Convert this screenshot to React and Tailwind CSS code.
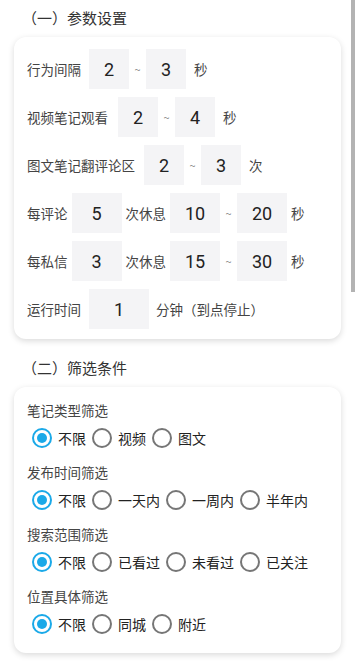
import { useState } from 'react'

const FONT = { fontFamily: '"Noto Sans CJK SC", "Noto Sans", sans-serif' }

function Box({ value, w = 'w-10' }) {
  return (
    <div
      className={`${w} h-10 bg-[#f4f4f6] flex items-center justify-center text-[18px] text-[#222] shrink-0`}
      style={{ fontFamily: 'Roboto, "Noto Sans", sans-serif' }}
    >
      {value}
    </div>
  )
}

function Tilde() {
  return <span className="w-[17px] text-center text-[11px] text-[#888] shrink-0">~</span>
}

function Radio({ checked, label, onClick }) {
  return (
    <button onClick={onClick} className="flex items-center mr-[6px]">
      <span
        className={`w-[20px] h-[20px] rounded-full border-2 flex items-center justify-center mr-[6px] ${
          checked ? 'border-[#1aa9e8]' : 'border-[#767676]'
        }`}
      >
        {checked && <span className="w-[10px] h-[10px] rounded-full bg-[#1aa9e8]" />}
      </span>
      <span className="text-[14px] text-[#222]">{label}</span>
    </button>
  )
}

function RadioGroup({ title, options }) {
  const [sel, setSel] = useState(0)
  return (
    <div>
      <div className="text-[13.5px] text-[#444] leading-[22px]">{title}</div>
      <div className="flex items-center pl-[5px] mt-[5px] h-[24px]">
        {options.map((o, i) => (
          <Radio key={o} label={o} checked={sel === i} onClick={() => setSel(i)} />
        ))}
      </div>
    </div>
  )
}

export default function App() {
  return (
    <div className="relative w-[355px] h-[664px] bg-white overflow-hidden" style={FONT}>
      {/* scrollbar thumb */}
      <div className="absolute right-0 top-0 w-[4px] h-[292px] bg-[#b3b3b3]" />

      <div className="pl-[22px] pt-[6px] text-[15px] text-[#333] leading-[24px]">（一）参数设置</div>

      <div className="mx-[14px] mt-[7px] rounded-[12px] bg-white shadow-[0_2px_6px_rgba(0,0,0,0.15)] pl-[13px] pt-[12px] pb-[10px] flex flex-col gap-2 text-[13.5px] text-[#444]">
        <div className="flex items-center">
          <span className="mr-2">行为间隔</span>
          <Box value="2" />
          <Tilde />
          <Box value="3" />
          <span className="ml-2">秒</span>
        </div>
        <div className="flex items-center">
          <span className="mr-[10px]">视频笔记观看</span>
          <Box value="2" />
          <Tilde />
          <Box value="4" />
          <span className="ml-2">秒</span>
        </div>
        <div className="flex items-center">
          <span className="mr-[9px]">图文笔记翻评论区</span>
          <Box value="2" />
          <Tilde />
          <Box value="3" />
          <span className="ml-2">次</span>
        </div>
        <div className="flex items-center">
          <span className="mr-1">每评论</span>
          <Box value="5" w="w-[50px]" />
          <span className="mx-1">次休息</span>
          <Box value="10" w="w-[50px]" />
          <Tilde />
          <Box value="20" w="w-[50px]" />
          <span className="ml-1">秒</span>
        </div>
        <div className="flex items-center">
          <span className="mr-1">每私信</span>
          <Box value="3" w="w-[50px]" />
          <span className="mx-1">次休息</span>
          <Box value="15" w="w-[50px]" />
          <Tilde />
          <Box value="30" w="w-[50px]" />
          <span className="ml-1">秒</span>
        </div>
        <div className="flex items-center">
          <span className="mr-2">运行时间</span>
          <Box value="1" w="w-[60px]" />
          <span className="ml-[7px]">分钟（到点停止）</span>
        </div>
      </div>

      <div className="pl-[22px] mt-[17px] text-[15px] text-[#333] leading-[24px]">（二）筛选条件</div>

      <div className="mx-[14px] mt-[7px] rounded-[12px] bg-white shadow-[0_2px_6px_rgba(0,0,0,0.15)] pl-[13px] pt-[12px] pb-[17px] flex flex-col gap-[11px]">
        <RadioGroup title="笔记类型筛选" options={['不限', '视频', '图文']} />
        <RadioGroup title="发布时间筛选" options={['不限', '一天内', '一周内', '半年内']} />
        <RadioGroup title="搜索范围筛选" options={['不限', '已看过', '未看过', '已关注']} />
        <RadioGroup title="位置具体筛选" options={['不限', '同城', '附近']} />
      </div>
    </div>
  )
}
